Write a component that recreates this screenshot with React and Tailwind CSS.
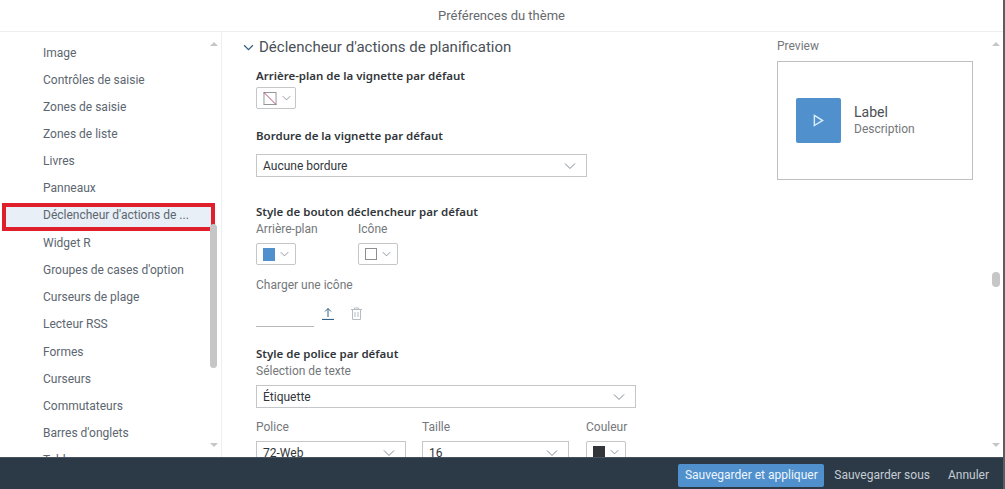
import React from "react";

const sections = [
  "Image",
  "Contrôles de saisie",
  "Zones de saisie",
  "Zones de liste",
  "Livres",
  "Panneaux",
  "Déclencheur d'actions de ...",
  "Widget R",
  "Groupes de cases d'option",
  "Curseurs de plage",
  "Lecteur RSS",
  "Formes",
  "Curseurs",
  "Commutateurs",
  "Barres d'onglets",
  "Tables",
];

function Chevron({ className }) {
  return (
    <svg viewBox="0 0 12 8" fill="none" stroke="currentColor" className={className}>
      <path d="M1 1.5 L6 6.5 L11 1.5" />
    </svg>
  );
}

function Label({ children, className = "" }) {
  return <div className={`h-4 leading-4 text-[12px] text-[#74777a] whitespace-nowrap ${className}`}>{children}</div>;
}

function Title({ children, className = "" }) {
  return <div className={`h-4 leading-4 text-[11.5px] font-semibold font-['Noto_Sans',sans-serif] text-[#32363a] whitespace-nowrap ${className}`}>{children}</div>;
}

function Select({ value, className = "" }) {
  return (
    <div className={`flex items-center justify-between h-[23px] border border-[#c4c6c8] pl-[6px] pr-[10px] text-[12px] text-[#32363a] shrink-0 ${className}`}>
      <span>{value}</span>
      <Chevron className="w-[12px] h-[8px] text-[#7b8894]" />
    </div>
  );
}

function Swatch({ children }) {
  return (
    <div className="flex items-center gap-[5px] w-10 h-[22px] border border-[#c4c6c8] rounded-[2px] pl-[6px]">
      {children}
      <Chevron className="w-[9px] h-[6px] text-[#6b7885]" />
    </div>
  );
}

function ScrollArrows() {
  return (
    <>
      <div className="absolute right-0 top-[10px] w-[8px] border-x-[4px] border-b-[4px] border-x-transparent border-b-[#c6c6c6]" />
      <div className="absolute right-0 bottom-[10px] w-[8px] border-x-[4px] border-t-[4px] border-x-transparent border-t-[#c6c6c6]" />
    </>
  );
}

export default function App() {
  return (
    <div className="w-[1005px] h-[489px] flex flex-col overflow-hidden bg-white font-['Roboto','Noto_Sans',sans-serif] border-r-2 border-[#5a5d60]">
      <div className="h-[32px] shrink-0 flex items-center justify-center border-b border-[#eeeeee] text-[13px] text-[#666a6e]">
        Préférences du thème
      </div>

      <div className="flex flex-1 min-h-0">
        {/* left list */}
        <div className="relative w-[222px] shrink-0 border-r border-[#eeeeee] overflow-hidden pt-[7.5px]">
          {sections.map((name, i) => (
            <div
              key={name}
              className={
                i === 6
                  ? "ml-[6px] mr-[10px] mt-[4.3px] mb-[2.9px] h-[20px] leading-[17px] pl-[37px] text-[12px] text-[#5c6670] whitespace-nowrap bg-[#e8eff6] outline-[4px] outline-[#e01f2c]"
                  : "h-[27.2px] leading-[27.2px] pl-[43px] text-[12px] text-[#5c6670] whitespace-nowrap"
              }
            >
              {name}
            </div>
          ))}
          <div className="absolute right-[3px] top-0 bottom-0 w-[8px]">
            <ScrollArrows />
            <div className="absolute top-[192px] left-0 w-[7px] h-[144px] rounded-[4px] bg-[#c6c6c6]" />
          </div>
        </div>

        {/* theme form */}
        <div className="relative flex flex-1 min-w-0 overflow-hidden">
          <div className="w-[555px] shrink-0 pl-[21px] pt-[5px]">
            <div className="flex items-center gap-[5px] h-5 text-[15px] text-[#4a5058] whitespace-nowrap">
              <Chevron className="w-[11px] h-[7px] text-[#346187] stroke-[1.5]" />
              Déclencheur d'actions de planification
            </div>

            <div className="pl-[13px]">
              <Title className="mt-[11px]">Arrière-plan de la vignette par défaut</Title>
              <div className="mt-[3px]">
                <Swatch>
                  <svg viewBox="0 0 14 14" className="w-[14px] h-[13px]" fill="none">
                    <rect x="0.5" y="0.5" width="13" height="13" stroke="#8b8f94" />
                    <path d="M0.5 0.5 L13.5 13.5" stroke="#b03a6a" />
                  </svg>
                </Swatch>
              </div>

              <Title className="mt-[19px]">Bordure de la vignette par défaut</Title>
              <Select value="Aucune bordure" className="mt-[10px] w-[331px]" />

              <Title className="mt-[27px]">Style de bouton déclencheur par défaut</Title>
              <div className="flex gap-[62px] mt-[1px]">
                <div className="w-10">
                  <Label>Arrière-plan</Label>
                  <div className="mt-[6px]">
                    <Swatch>
                      <div className="w-[12px] h-[13px] bg-[#4f90cd]" />
                    </Swatch>
                  </div>
                </div>
                <div className="w-10">
                  <Label>Icône</Label>
                  <div className="mt-[6px]">
                    <Swatch>
                      <div className="w-[12px] h-[12px] bg-white border border-[#8b8f94]" />
                    </Swatch>
                  </div>
                </div>
              </div>

              <Label className="mt-[12px]">Charger une icône</Label>
              <div className="flex mt-[12px] h-[22px]">
                <div className="w-[58px] h-[22px] border-b border-[#b5b8bb]" />
                <svg viewBox="0 0 12 13" className="ml-[8px] w-[12px] h-[13px] mt-[2px]" fill="none" stroke="#346187">
                  <path d="M6 10 V1.5 M3 4.5 L6 1.5 L9 4.5" />
                  <path d="M0 12.5 H12" strokeWidth="1.2" />
                </svg>
                <svg viewBox="0 0 11 13" className="ml-[17px] w-[11px] h-[13px] mt-[2px]" fill="none" stroke="#b4bcc4">
                  <path d="M0 2.5 H11 M3.5 2.5 V1 H7.5 V2.5 M1.5 2.5 V12.5 H9.5 V2.5 M4 5 V10 M7 5 V10" />
                </svg>
              </div>

              <Title className="mt-[19px]">Style de police par défaut</Title>
              <Label className="mt-[1px]">Sélection de texte</Label>
              <Select value="Étiquette" className="mt-[6px] w-[380px]" />

              <div className="flex mt-[11px]">
                <div className="w-[166px]">
                  <Label>Police</Label>
                  <Select value="72-Web" className="mt-[6px] w-[150px]" />
                </div>
                <div className="w-[164px]">
                  <Label>Taille</Label>
                  <Select value="16" className="mt-[6px] w-[147px]" />
                </div>
                <div>
                  <Label>Couleur</Label>
                  <div className="mt-[6px]">
                    <Swatch>
                      <div className="w-[12px] h-[13px] bg-[#32363a]" />
                    </Swatch>
                  </div>
                </div>
              </div>
            </div>
          </div>

          {/* preview */}
          <div className="pt-[6px]">
            <Label>Preview</Label>
            <div className="mt-[7px] w-[196px] h-[119px] border border-[#bfbfbf] flex items-center pl-[18px] gap-[13px]">
              <div className="w-[45px] h-[45px] rounded-[2px] bg-[#4f90cd] flex items-center justify-center">
                <svg viewBox="0 0 12 14" className="w-[11px] h-[13px]" fill="none" stroke="#d7ecfb" strokeWidth="1.6">
                  <path d="M1.5 1.5 L10.5 7 L1.5 12.5 Z" />
                </svg>
              </div>
              <div className="mb-[2px]">
                <div className="text-[14px] leading-[18px] text-[#4a5058]">Label</div>
                <div className="text-[12px] leading-[16px] text-[#74777a]">Description</div>
              </div>
            </div>
          </div>

          <div className="absolute right-[3px] top-0 bottom-0 w-[8px]">
            <ScrollArrows />
            <div className="absolute top-[240px] left-0 w-[8px] h-[15px] rounded-[4px] bg-[#c6c6c6]" />
          </div>
        </div>
      </div>

      <div className="h-[32px] shrink-0 flex items-center justify-end gap-[10px] bg-[#2c3a47] border-t border-[#46525d] pt-[3px] pr-[14px] text-[12px] text-[#c5ccd3]">
        <div className="h-[23px] leading-[23px] w-[146px] text-center rounded-[2px] bg-[#4f90cd] text-[#eef5fb]">Sauvegarder et appliquer</div>
        <div>Sauvegarder sous</div>
        <div className="ml-[8px]">Annuler</div>
      </div>
    </div>
  );
}
